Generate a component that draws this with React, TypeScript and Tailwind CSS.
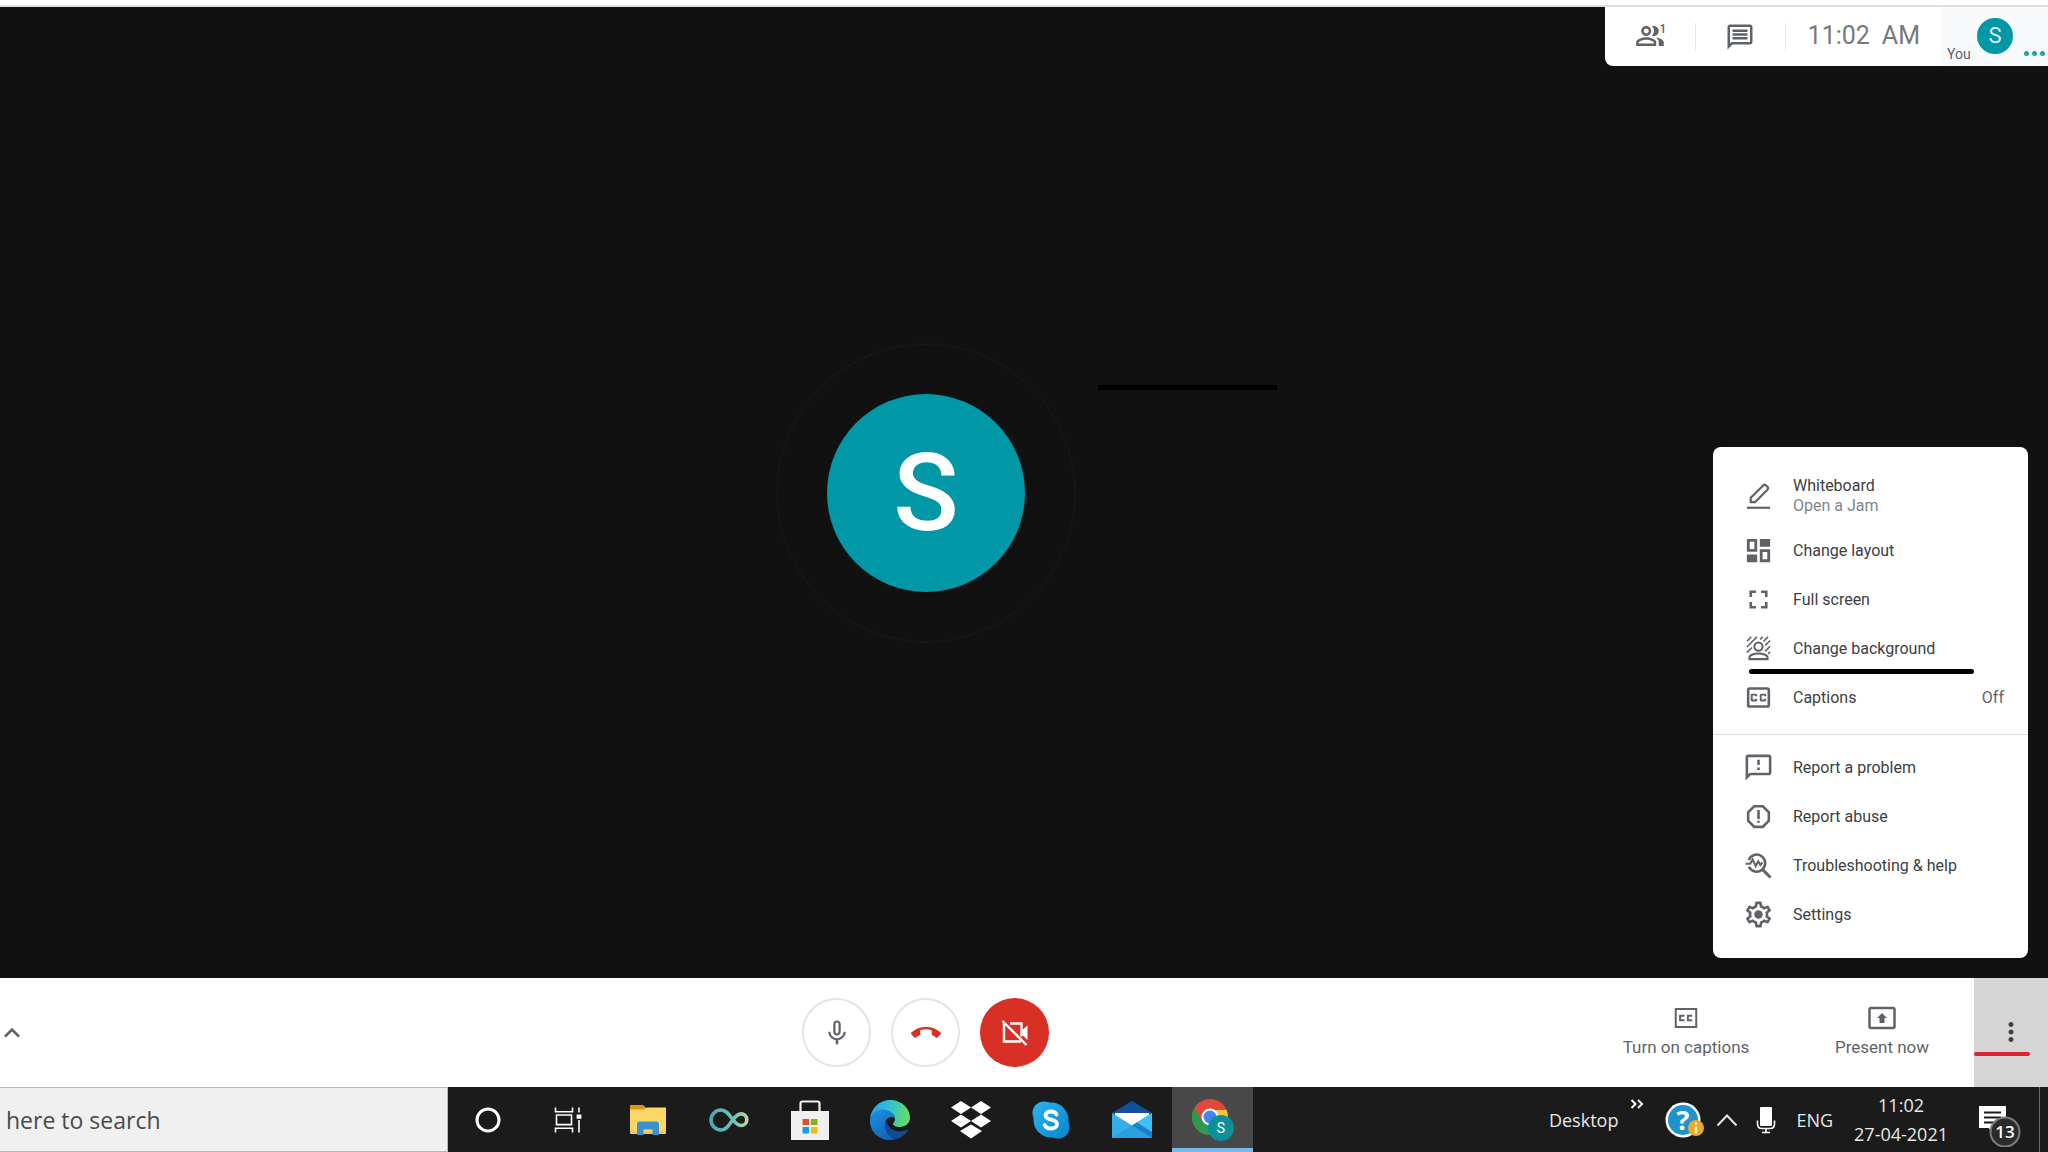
import React, { useState } from 'react'
import {
  MdOutlinePeopleAlt,
  MdOutlineMessage,
  MdFullscreen,
  MdOutlineClosedCaption,
  MdOutlineFeedback,
  MdOutlineReport,
  MdMicNone,
  MdCallEnd,
  MdPresentToAll,
  MdMoreVert,
  MdKeyboardArrowUp,
} from 'react-icons/md'

const ICON = 'w-[31px] h-[31px] shrink-0'

/* ---------- Menu icons ---------- */

function PencilIcon() {
  return (
    <svg viewBox="0 0 24 24" className={ICON} fill="none" stroke="currentColor" strokeWidth="1.7">
      <path d="M6 17.2v-3.4L15.6 4.2a1.6 1.6 0 0 1 2.2 0l1.1 1.1a1.6 1.6 0 0 1 0 2.2L9.3 17.2z" strokeLinejoin="round" />
      <path d="M3 21.5h18" />
    </svg>
  )
}

function LayoutIcon() {
  return (
    <svg viewBox="0 0 24 24" className={ICON} fill="currentColor">
      <path fillRule="evenodd" d="M3 3h8v10H3zM5.2 5.2v5.6h3.6V5.2z" />
      <path d="M13 3h8v6h-8zM3 15h8v6H3z" />
      <path fillRule="evenodd" d="M13 11h8v10h-8zM15.2 13.2v5.6h3.6v-5.6z" />
    </svg>
  )
}

function BackgroundIcon() {
  return (
    <svg viewBox="0 0 24 24" className={ICON} fill="none" stroke="currentColor" strokeWidth="1.6">
      <circle cx="12" cy="10.5" r="3.2" />
      <path d="M5 20.2v-1.4c0-1.9 4-3 7-3s7 1.1 7 3v1.4z" />
      <path d="M3 6.4 6.4 3M3 10.8 10.8 3M3 15.2l4-4M15.2 3l-2 2M19.4 3l-3.6 3.6M21 5.8l-3.8 3.8M21 10.2l-4 4M21 14.6l-1.6 1.6" strokeWidth="1.2" />
    </svg>
  )
}

function TroubleshootIcon() {
  return (
    <svg viewBox="0 0 24 24" className={ICON} fill="none" stroke="currentColor" strokeWidth="2">
      <path d="M4.4 7.8A6.6 6.6 0 1 1 4.6 13" />
      <path d="m15 15 6.3 6.3" strokeWidth="2.3" />
      <path d="M2 10.6h3.6l1.8-3.2 2.4 5 2-3.6 1.6 2.8 1.6-2" strokeWidth="1.6" />
    </svg>
  )
}

function SettingsIcon() {
  return (
    <svg viewBox="0 0 24 24" className={ICON} fill="currentColor">
      <path d="M19.43 12.98c.04-.32.07-.64.07-.98 0-.34-.03-.66-.07-.98l2.11-1.65c.19-.15.24-.42.12-.64l-2-3.46c-.09-.16-.26-.25-.44-.25-.06 0-.12.01-.17.03l-2.49 1c-.52-.4-1.08-.73-1.69-.98l-.38-2.65C14.46 2.18 14.25 2 14 2h-4c-.25 0-.46.18-.49.42l-.38 2.65c-.61.25-1.17.59-1.69.98l-2.49-1c-.06-.02-.12-.03-.18-.03-.17 0-.34.09-.43.25l-2 3.46c-.13.22-.07.49.12.64l2.11 1.65c-.04.32-.07.65-.07.98 0 .33.03.66.07.98l-2.11 1.65c-.19.15-.24.42-.12.64l2 3.46c.09.16.26.25.44.25.06 0 .12-.01.17-.03l2.49-1c.52.4 1.08.73 1.69.98l.38 2.65c.03.24.24.42.49.42h4c.25 0 .46-.18.49-.42l.38-2.65c.61-.25 1.17-.59 1.69-.98l2.49 1c.06.02.12.03.18.03.17 0 .34-.09.43-.25l2-3.46c.12-.22.07-.49-.12-.64l-2.11-1.65zm-1.98-1.71c.04.31.05.52.05.73 0 .21-.02.43-.05.73l-.14 1.13.89.7 1.08.84-.7 1.21-1.27-.51-1.04-.42-.9.68c-.43.32-.84.56-1.25.73l-1.06.43-.16 1.13-.2 1.35h-1.4l-.19-1.35-.16-1.13-1.06-.43c-.43-.18-.83-.41-1.23-.71l-.91-.7-1.06.43-1.27.51-.7-1.21 1.08-.84.89-.7-.14-1.13c-.03-.31-.05-.54-.05-.74s.02-.43.05-.73l.14-1.13-.89-.7-1.08-.84.7-1.21 1.27.51 1.04.42.9-.68c.43-.32.84-.56 1.25-.73l1.06-.43.16-1.13.2-1.35h1.39l.19 1.35.16 1.13 1.06.43c.43.18.83.41 1.23.71l.91.7 1.06-.43 1.27-.51.7 1.21-1.07.85-.89.7.14 1.13z" />
      <circle cx="12" cy="12" r="3.3" />
    </svg>
  )
}

/* ---------- Call bar icons ---------- */

function CameraOffIcon() {
  return (
    <svg viewBox="0 0 28 26" className="w-7 h-[26px]" fill="none" stroke="currentColor" strokeWidth="2.4">
      <path d="M9 3.500h11.500v13" />
      <path d="M3 3v18.500h17" />
      <path d="M1.500 1l24 24" />
      <path d="M20.500 10.500L26.500 5.500v14.500l-6-6z" fill="currentColor" stroke="none" />
    </svg>
  )
}

function CaptionsIcon() {
  return (
    <svg viewBox="0 0 24 24" className="w-[30px] h-[30px]" fill="none" stroke="currentColor" strokeWidth="1.6">
      <path d="M3.800 4.800h16.400v14.400H3.800z" />
      <path d="M10.800 10.200H7.300v3.600h3.500M17 10.200h-3.500v3.600H17" />
    </svg>
  )
}

/* ---------- Taskbar icons ---------- */

function CortanaIcon() {
  return (
    <svg viewBox="0 0 28 28" className="w-7 h-7" fill="none">
      <circle cx="14" cy="14" r="11" stroke="#fff" strokeWidth="3" />
    </svg>
  )
}

function TaskViewIcon() {
  return (
    <svg viewBox="0 0 28 28" className="w-7 h-7" fill="none" stroke="#fff" strokeWidth="1.6">
      <path d="M1.5 1.5v4.2h17V1.5M1.5 26.5v-4.2h17v4.2" />
      <path d="M2.5 9h15v9.6h-15z" />
      <path d="M25 1.5v5M25 14v12.5" />
      <path d="M22.6 8.4h4.8v4.4h-4.8z" fill="#fff" stroke="none" />
    </svg>
  )
}

function ExplorerIcon() {
  return (
    <svg viewBox="0 0 36 32" className="w-9 h-8">
      <path d="M0 1h13l3 2.500V6H0z" fill="#d9960f" />
      <path d="M0 5.500h14l3-2H36V30H0z" fill="#fcd768" />
      <path d="M0 27h36v3H0z" fill="#f3c355" />
      <path d="M7 31V20a2.500 2.500 0 0 1 2.500-2.500h17A2.500 2.500 0 0 1 29 20v11h-6.500v-5.500h-9V31z" fill="#3b90cf" />
    </svg>
  )
}

function InfinityIcon() {
  return (
    <svg viewBox="0 0 40 26" className="w-10 h-[26px]" fill="none">
      <defs>
        <linearGradient id="inf" x1="0" x2="40" y1="0" y2="0" gradientUnits="userSpaceOnUse">
          <stop offset="0" stopColor="#4fa3ba" />
          <stop offset="0.6" stopColor="#6cc5b4" />
          <stop offset="1" stopColor="#b9dc9c" />
        </linearGradient>
      </defs>
      <path
        d="M22.500 14.500C19 19.500 16.500 23 12 23A10 10 0 0 1 12 3c5 0 8 4.500 11 8.500 2.500 3.500 5 7 9 7a5.800 5.800 0 0 0 0-11.600c-4.500 0-7 4.600-9.500 7.600z"
        stroke="url(#inf)"
        strokeWidth="3.600"
      />
    </svg>
  )
}

function StoreIcon() {
  return (
    <svg viewBox="0 0 38 40" className="w-[38px] h-10">
      <path d="M9.500 12V3.500a2 2 0 0 1 2-2h15a2 2 0 0 1 2 2V12" fill="none" stroke="#f2f2f2" strokeWidth="2.200" />
      <path d="M0 11h38v29H0z" fill="#f0f0f0" />
      <path d="M11.500 19h6.500v6h-6.500z" fill="#e0502c" />
      <path d="M20 19h6.500v6H20z" fill="#7fb51c" />
      <path d="M11.500 27h6.500v6.500h-6.500z" fill="#1b9ae4" />
      <path d="M20 27h6.500v6.500H20z" fill="#f6b911" />
    </svg>
  )
}

function EdgeIcon() {
  return (
    <svg viewBox="0 0 40 40" className="w-10 h-10">
      <defs>
        <linearGradient id="edgeTop" x1="0" x2="40" y1="10" y2="18" gradientUnits="userSpaceOnUse">
          <stop offset="0" stopColor="#2b9fe0" />
          <stop offset="0.5" stopColor="#34c3cf" />
          <stop offset="1" stopColor="#6be04f" />
        </linearGradient>
        <linearGradient id="edgeLeft" x1="0" x2="18" y1="12" y2="40" gradientUnits="userSpaceOnUse">
          <stop offset="0" stopColor="#1e8fe0" />
          <stop offset="1" stopColor="#0f63b8" />
        </linearGradient>
      </defs>
      <path d="M0 19C1 8 9.500 0 20 0c11 0 20 8 20 17.500 0 6-5 9.500-10 9.500-4 0-7-1.500-7-3 0-1 2-2 2-5 0-4-4-8-10-8S2.500 14.500 0 19z" fill="url(#edgeTop)" />
      <path d="M0 21C0 14 6 9.500 12.500 9.500c6.500 0 12 4 12.500 9-1-1-2.500-1.500-4-1.500-3 0-6 3-6 7.500C15 32 22 37 27 38.500c-2 .9-4.500 1.500-7 1.500C9 40 0 32 0 21z" fill="url(#edgeLeft)" />
      <path d="M16 20c-3 7 0 15.500 8 19.500 6-.8 11-4.500 14-9 .3-.6-.3-1-.8-.8C28 34 18 30 16 20z" fill="#124b94" />
    </svg>
  )
}

function DropboxIcon() {
  return (
    <svg viewBox="0 0 40 38" className="w-10 h-[38px]" fill="#fff">
      <path d="M10 0l10 6.500-10 6.500L0 6.500zM30 0l10 6.500-10 6.500-10-6.500zM10 13.500l10 6.500-10 6.500L0 20zM30 13.500L40 20l-10 6.500L20 20zM20 23.500l11 6.500-11 7.500L9 30z" />
    </svg>
  )
}

function SkypeIcon() {
  return (
    <svg viewBox="0 0 38 38" className="w-[38px] h-[38px]">
      <defs>
        <linearGradient id="skype" x1="0" x2="38" y1="4" y2="34" gradientUnits="userSpaceOnUse">
          <stop offset="0" stopColor="#2bb3ec" />
          <stop offset="1" stopColor="#0a86cf" />
        </linearGradient>
      </defs>
      <circle cx="12" cy="12" r="11.500" fill="url(#skype)" />
      <circle cx="26" cy="26" r="11.500" fill="url(#skype)" />
      <circle cx="19" cy="19" r="17.500" fill="url(#skype)" />
      <path
        d="M24.500 13.500c-1-2-3-3-5.600-3-3 0-5.400 1.500-5.400 4 0 5.500 11.500 2.800 11.500 8.500 0 2.800-2.600 4.500-6 4.500-3 0-5.400-1.200-6.300-3.500"
        fill="none"
        stroke="#fff"
        strokeWidth="3.800"
        strokeLinecap="round"
      />
    </svg>
  )
}

function MailIcon() {
  return (
    <svg viewBox="0 0 40 37" className="w-10 h-[37px]">
      <path d="M0 12L20 0l20 12v8H0z" fill="#0f4f9c" />
      <path d="M3 12h34v14H3z" fill="#fff" />
      <path d="M0 12l20 12.500L40 12v25H0z" fill="#33aee6" />
      <path d="M20 24.500L40 12v25z" fill="#3fc0f0" />
      <path d="M20 24.500L40 37H0z" fill="#2b9fe0" />
      <path d="M20 24.500l5-3L40 31v6z" fill="#1c7fca" />
    </svg>
  )
}

function ChromeIcon() {
  return (
    <svg viewBox="0 0 42 42" className="w-[42px] h-[42px]">
      <circle cx="18" cy="18" r="18" fill="#e0483a" />
      <path d="M2.400 9A18 18 0 0 0 18 36l8-13.500-8 3-8-3.500z" fill="#2c9b4f" />
      <path d="M18 36a18 18 0 0 0 16.500-25H18l8 11z" fill="#f6c63c" />
      <circle cx="18" cy="18" r="8.500" fill="#fff" />
      <circle cx="18" cy="18" r="6.500" fill="#4285f4" />
      <circle cx="29" cy="29" r="13" fill="#0c8f99" />
      <text x="29" y="34" textAnchor="middle" fill="#fff" fontSize="14" fontFamily="Roboto, sans-serif">
        S
      </text>
    </svg>
  )
}

const navButtons = [
  { label: 'Cortana', icon: <CortanaIcon /> },
  { label: 'Task view', icon: <TaskViewIcon /> },
]

const apps = [
  { label: 'File Explorer', icon: <ExplorerIcon /> },
  { label: 'Web companion', icon: <InfinityIcon /> },
  { label: 'Microsoft Store', icon: <StoreIcon /> },
  { label: 'Microsoft Edge', icon: <EdgeIcon /> },
  { label: 'Dropbox', icon: <DropboxIcon /> },
  { label: 'Skype', icon: <SkypeIcon /> },
  { label: 'Mail', icon: <MailIcon /> },
  { label: 'Google Chrome', icon: <ChromeIcon />, active: true },
]

/* ---------- Meeting ---------- */

function StatusPanel() {
  return (
    <div className="absolute top-0 right-0 flex h-[59px] bg-white rounded-bl-lg text-[#5f6368] overflow-hidden">
      <button aria-label="Participants" className="relative w-[90px] flex items-center justify-center pb-0.5">
        <MdOutlinePeopleAlt className="w-[30px] h-[30px]" />
        <span className="absolute left-[55px] top-[14px] text-xs leading-4 font-medium">1</span>
      </button>
      <div className="w-px h-7 mt-4 bg-[#e4e6e8]" />
      <button aria-label="Chat" className="w-[89px] flex items-center justify-center">
        <MdOutlineMessage className="w-[30px] h-[30px]" />
      </button>
      <div className="w-px h-7 mt-4 bg-[#e4e6e8]" />
      <div className="flex items-center gap-3 pl-[22px] pr-[22px] pb-0.5 text-[25px] text-[#77797c]">
        <span>11:02</span>
        <span>AM</span>
      </div>
      <div className="relative w-[106px] flex bg-[#f8f9fa]">
        <span className="self-end pl-[5px] pb-0.5 text-sm leading-5 w-[35px]">You</span>
        <div className="w-9 h-9 mt-[11px] rounded-full bg-[#0097a7] text-[#d8f1f3] text-[22px] leading-9 text-center">
          S
        </div>
        <div className="self-end flex gap-[3px] pb-[10px] pl-[11px]">
          <i className="w-[5px] h-[5px] rounded-full bg-[#1aa79c]" />
          <i className="w-[5px] h-[5px] rounded-full bg-[#1aa79c]" />
          <i className="w-[5px] h-[5px] rounded-full bg-[#1aa79c]" />
        </div>
      </div>
    </div>
  )
}

type ItemProps = { icon: React.ReactNode; label: string; value?: string; underline?: boolean }

function MenuItem({ icon, label, value, underline }: ItemProps) {
  return (
    <button role="menuitem" className="relative flex items-center w-full h-[49px] pl-[30px] pr-6 gap-[19px] text-left text-[#5f6368]">
      {icon}
      <span className="flex-1 text-[#3c4043] whitespace-nowrap">{label}</span>
      {value && <span>{value}</span>}
      {underline && <span className="absolute left-9 -bottom-px w-[225px] h-[5px] rounded-full bg-black" />}
    </button>
  )
}

function OptionsMenu() {
  return (
    <div role="menu" className="absolute right-5 bottom-5 w-[315px] pt-[18px] pb-[19px] bg-white rounded-lg text-base">
      <button role="menuitem" className="flex items-center w-full h-[61px] pl-[30px] gap-[19px] text-left text-[#5f6368]">
        <PencilIcon />
        <span className="leading-5">
          <span className="block text-[#3c4043]">Whiteboard</span>
          <span className="block text-[#80868b]">Open a Jam</span>
        </span>
      </button>
      <MenuItem icon={<LayoutIcon />} label="Change layout" />
      <MenuItem icon={<MdFullscreen className={ICON} />} label="Full screen" />
      <MenuItem icon={<BackgroundIcon />} label="Change background" underline />
      <MenuItem icon={<MdOutlineClosedCaption className={ICON} />} label="Captions" value="Off" />
      <div className="h-px mt-3 mb-2 bg-[#dadce0]" />
      <MenuItem icon={<MdOutlineFeedback className={ICON} />} label="Report a problem" />
      <MenuItem icon={<MdOutlineReport className={ICON} />} label="Report abuse" />
      <MenuItem icon={<TroubleshootIcon />} label="Troubleshooting & help" />
      <MenuItem icon={<SettingsIcon />} label="Settings" />
    </div>
  )
}

function Stage() {
  return (
    <main className="relative flex-1 flex items-center justify-center pr-[196px] bg-[#111111]">
      <StatusPanel />
      <div className="relative w-[300px] h-[300px] rounded-full border-2 border-[#161616] flex items-center justify-center">
        <div className="w-[198px] h-[198px] rounded-full bg-[#0097a7] flex items-center justify-center text-white text-[108px] leading-none font-medium">
          S
        </div>
        {/* marker stroke */}
        <div className="absolute left-80 top-10 w-[179px] h-[5px] bg-black" />
      </div>
      <OptionsMenu />
    </main>
  )
}

function CallControls() {
  const round = 'w-[69px] h-[69px] rounded-full flex items-center justify-center'
  return (
    <footer className="grid grid-cols-[45fr_auto_56fr] h-[109px] bg-white text-[#5f6368]">
      <button aria-label="Meeting details" className="justify-self-start w-6 overflow-hidden flex items-center justify-center">
        <MdKeyboardArrowUp className="w-8 h-8 shrink-0" />
      </button>
      <div className="flex items-center gap-5">
        <button aria-label="Turn off microphone" className={`${round} border-2 border-[#e3e4e6]`}>
          <MdMicNone className="w-[30px] h-[30px]" />
        </button>
        <button aria-label="Leave call" className={`${round} border-2 border-[#e3e4e6] text-[#d93025]`}>
          <MdCallEnd className="w-[30px] h-[30px]" />
        </button>
        <button aria-label="Turn on camera" className={`${round} bg-[#d93025] text-white`}>
          <CameraOffIcon />
        </button>
      </div>
      <div className="flex justify-end text-[17px] leading-5">
        <button className="flex flex-col items-center justify-center pb-[5px] gap-1 w-44">
          <CaptionsIcon />
          Turn on captions
        </button>
        <button className="flex flex-col items-center justify-center pb-[5px] gap-1 ml-5 mr-1 w-44">
          <MdPresentToAll className="w-[30px] h-[30px]" />
          Present now
        </button>
        <button aria-label="More options" className="relative w-[74px] flex items-center justify-center pb-0.5 bg-[#d5d5d5] text-[#3c4043]">
          <MdMoreVert className="w-[30px] h-[30px]" />
          <span className="absolute left-0 bottom-[31px] w-14 h-1 rounded-full bg-[#e0202a]" />
        </button>
      </div>
    </footer>
  )
}

/* ---------- Windows taskbar ---------- */

function Taskbar() {
  const [query, setQuery] = useState('')

  return (
    <div className="flex h-[65px] bg-[#1b1b1b] text-[#e8e8e8] text-lg leading-6 font-['Open_Sans','Noto_Sans',sans-serif]">
      <input
        type="text"
        aria-label="Search"
        value={query}
        onChange={(e) => setQuery(e.target.value)}
        placeholder="here to search"
        className="w-[448px] pl-1.5 bg-[#f0f0f0] border border-l-0 border-[#b8b8b8] text-[23px] text-[#4a4a4a] placeholder-[#4a4a4a] outline-none"
      />
      <div className="grid grid-cols-2 w-40">
        {navButtons.map((b) => (
          <button key={b.label} aria-label={b.label} className="flex items-center justify-center">
            {b.icon}
          </button>
        ))}
      </div>
      <div className="grid grid-cols-8 w-[645px]">
        {apps.map((app) => (
          <button
            key={app.label}
            aria-label={app.label}
            className={
              app.active
                ? 'flex items-center justify-center pt-1 bg-[#484848] border-b-4 border-[#76b9ed]'
                : 'flex items-center justify-center'
            }
          >
            {app.icon}
          </button>
        ))}
      </div>

      {/* System tray */}
      <div className="flex items-center ml-auto">
        <span>Desktop</span>
        <svg viewBox="0 0 14 10" className="w-[14px] h-[10px] ml-3 mb-8" fill="none" stroke="#fff" strokeWidth="2">
          <path d="M1.500 1l4 4-4 4M8 1l4 4-4 4" />
        </svg>
        <button aria-label="Help" className="ml-[21px]">
          <svg viewBox="0 0 40 36" className="w-10 h-9">
            <circle cx="18" cy="18" r="17.500" fill="#fff" />
            <circle cx="18" cy="18" r="15" fill="#1d93cf" />
            <text x="18" y="28" textAnchor="middle" fill="#fff" fontSize="27" fontWeight="700">
              ?
            </text>
            <circle cx="31" cy="26" r="8" fill="#eaa92c" />
            <path d="M31 20.500v2.500M31 24.500v7" stroke="#fde9b8" strokeWidth="2.500" />
          </svg>
        </button>
        <button aria-label="Show hidden icons" className="ml-[11px]">
          <svg viewBox="0 0 22 14" className="w-[22px] h-[14px]" fill="none" stroke="#e8e8e8" strokeWidth="2">
            <path d="M1.500 12.500L11 2.500l9.500 10" />
          </svg>
        </button>
        <svg viewBox="0 0 20 28" className="w-5 h-7 ml-[18px]" fill="none" stroke="#fff" strokeWidth="1.600">
          <rect x="4" y="1" width="12" height="19" rx="1" fill="#fff" stroke="none" />
          <path d="M1.500 14.500v3.500q0 4.500 4.500 4.500h8q4.500 0 4.500-4.500v-3.500M10 22.500V26M6 26.500h8" />
        </svg>
        <span className="ml-5">ENG</span>
        <div className="ml-[21px] text-center leading-[29px]">
          <div>11:02</div>
          <div>27-04-2021</div>
        </div>
        <button aria-label="Notifications" className="ml-[31px] mt-3">
          <svg viewBox="0 0 44 42" className="w-11 h-[42px]">
            <path d="M0 1h27v22H14.500v5l-5-5H0z" fill="#fff" />
            <path d="M5 7.500h17M5 12.500h17M5 17.500h11" stroke="#1b1b1b" strokeWidth="1.800" />
            <circle cx="26" cy="27" r="14.500" fill="#2b2b2b" stroke="#7d7d7d" strokeWidth="2" />
            <text x="26" y="33" textAnchor="middle" fill="#fff" fontSize="17" fontWeight="600">
              13
            </text>
          </svg>
        </button>
        <div className="w-px h-full ml-4 mr-2 bg-[#6a6a6a]" />
      </div>
    </div>
  )
}

export default function App() {
  return (
    <div className="flex flex-col min-h-screen bg-white font-[Roboto,sans-serif]">
      <div className="h-[7px] border-b-2 border-[#dcdfe2]" />
      <Stage />
      <CallControls />
      <Taskbar />
    </div>
  )
}
